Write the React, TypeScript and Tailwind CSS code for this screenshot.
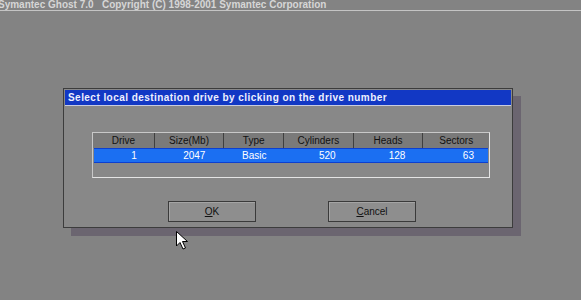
export default function App() {
  const cols = [
    { h: 'Drive', v: '1', w: 'w-[62px]', a: 'justify-end pr-[18px]' },
    { h: 'Size(Mb)', v: '2047', w: 'w-[70px]', a: 'justify-end pr-[19px]' },
    { h: 'Type', v: 'Basic', w: 'w-[60px]', a: 'justify-center' },
    { h: 'Cylinders', v: '520', w: 'w-[70px]', a: 'justify-end pr-[18px]' },
    { h: 'Heads', v: '128', w: 'w-[70px]', a: 'justify-end pr-[18px]' },
    { h: 'Sectors', v: '63', w: 'w-[66px]', a: 'justify-end pr-[14px]' },
  ];

  return (
    <div className="relative w-[581px] h-[300px] overflow-hidden bg-[#838383] font-['Liberation_Sans',sans-serif]">
      {/* top banner */}
      <div className="h-[10px] -ml-[2px] text-[10px] leading-[10px] font-bold text-[#d6d6d6] whitespace-pre">
        Symantec Ghost 7.0   Copyright (C) 1998-2001 Symantec Corporation
      </div>
      <div className="h-px bg-[#c4c4c4]" />

      {/* dialog */}
      <div className="ml-[63px] mt-[77px] w-[450px] h-[140px] border border-[#3c3c3c] bg-[#888888] shadow-[8px_8px_0_0_#6b6570] flex flex-col p-px">
        <div className="h-[16px] bg-[#1238c4] border-b border-[#c8cce0] flex items-center pl-[3px] text-[10px] font-bold text-[#eef0ff] tracking-[0.45px]">
          Select local destination drive by clicking on the drive number
        </div>

        <div className="ml-[27px] mt-[26px] w-[398px] h-[46px] border border-[#e4e4e4] border-t-[#c8c8c8] border-l-[#c8c8c8] flex flex-col">
          <div className="flex h-[15px] bg-[#7a7a7a]">
            {cols.map((c, i) => (
              <div
                key={c.h}
                className={`${c.w} flex items-center justify-center text-[10px] text-[#111] ${i < cols.length - 1 ? 'border-r border-[#3f3f3f]' : ''}`}
              >
                {c.h}
              </div>
            ))}
          </div>
          <div className="mx-px flex h-[15px] bg-[#1b6ff2] border-y border-[#0c3fd0]">
            {cols.map((c, i) => (
              <div
                key={c.h}
                className={`${i === 0 ? 'w-[61px]' : i === cols.length - 1 ? 'w-[65px]' : c.w} flex items-center ${c.a} text-[10px] text-white`}
              >
                {c.v}
              </div>
            ))}
          </div>
        </div>

        <div className="mt-[23px] ml-[103px] flex gap-[72px]">
          <button className="w-[88px] h-[21px] border border-[#3a3a3a] bg-[#8e8e8e] shadow-[inset_1px_1px_0_#a4a4a4] flex items-center justify-center text-[10px] text-[#111]">
            <span><span className="underline">O</span>K</span>
          </button>
          <button className="w-[88px] h-[21px] border border-[#3a3a3a] bg-[#8e8e8e] shadow-[inset_1px_1px_0_#a4a4a4] flex items-center justify-center text-[10px] text-[#111]">
            <span><span className="underline">C</span>ancel</span>
          </button>
        </div>
      </div>

      {/* mouse pointer */}
      <svg className="absolute left-[176px] top-[231px]" width="14" height="20" viewBox="0 0 14 20">
        <path d="M0.5 0.5 L0.5 15 L4 11.5 L7 18 L9.5 17 L6.5 10.5 L11.5 10.5 Z" fill="#fff" stroke="#000" strokeWidth="1" />
      </svg>
    </div>
  );
}
